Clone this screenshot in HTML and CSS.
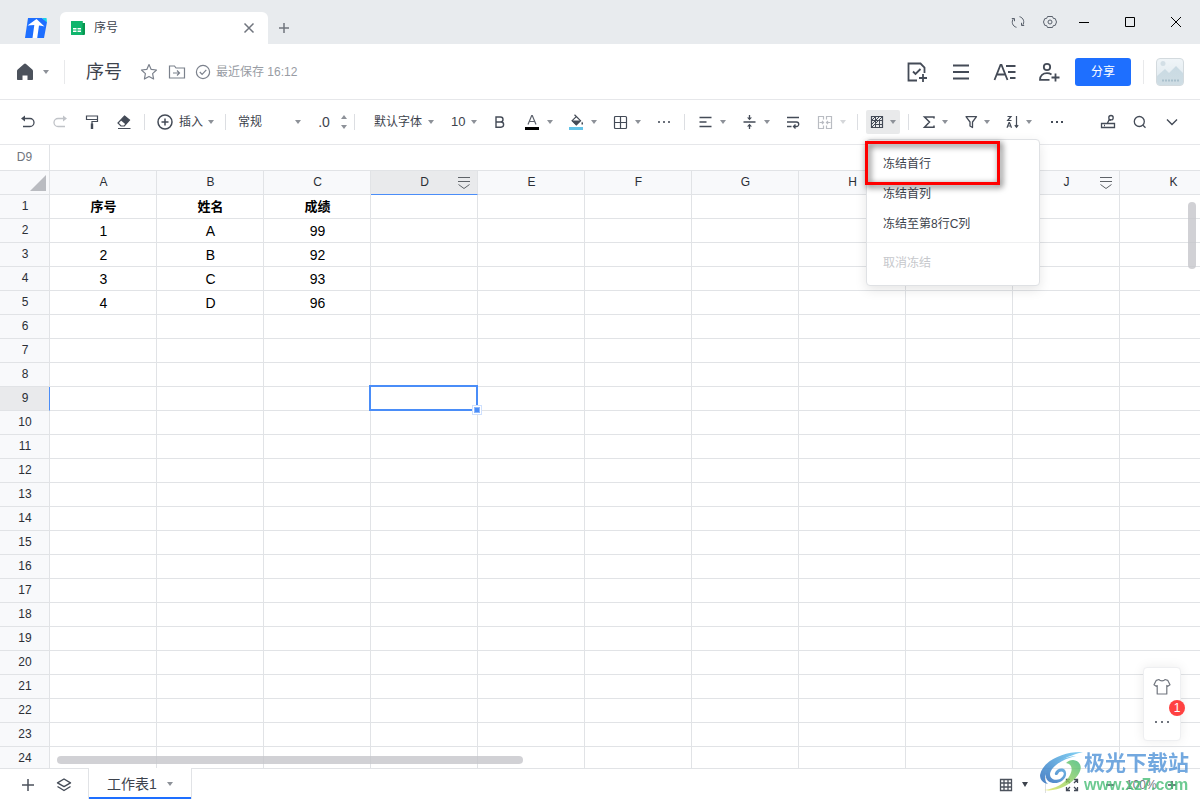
FILE: index.html
```html
<!DOCTYPE html>
<html lang="zh-CN">
<head>
<meta charset="utf-8">
<title>序号</title>
<link rel="stylesheet" href="styles.css">
</head>
<body>
<header class="titlebar">
  <svg class="logo" width="24" height="22" viewBox="0 0 24 22"><path d="M4 1h14l5 4-3 16H1z" fill="#1e6fff"/><path d="M18 1h4.500l.5 4.500z" fill="#19d3e6"/><path d="M3.500 8.500 12.500 2l8 7.500-3.500-.7-2-.3-1.800 12.500H8.500L10.300 8z" fill="#fff"/></svg>
  <div class="doc-tab">
    <svg width="14" height="14" viewBox="0 0 14 14"><path d="M1 0h10.500v2H14v11a1 1 0 0 1-1 1H1a1 1 0 0 1-1-1V1a1 1 0 0 1 1-1z" fill="#07964f"/><path d="M0 1a1 1 0 0 1 1-1h10.500v14H1a1 1 0 0 1-1-1z" fill="#10b56d"/><path d="M2 7h3.500v1.500H2zm4.500 0H10v1.500H6.500zM2 9.500h3.500V11H2zm4.500 0H10V11H6.500z" fill="#fff"/></svg>
    <span class="doc-tab-name">序号</span>
    <button class="plain" aria-label="关闭标签"><svg width="12" height="12" viewBox="0 0 12 12" fill="none" stroke="#70757e" stroke-width="1.500"><path d="m1.500 1.500 9 9m0-9-9 9"/></svg></button>
  </div>
  <button class="plain new-tab" aria-label="新标签"><svg width="12" height="12" viewBox="0 0 12 12" fill="none" stroke="#70757e" stroke-width="1.500"><path d="M6 1v10M1 6h10"/></svg></button>
  <div class="window-tools">
    <button class="plain w32" aria-label="刷新"><svg width="14" height="14" viewBox="0 0 14 14" fill="none" stroke="#5a616c"><path d="M5.500 12.300A5.300 5.300 0 0 1 2.600 3.600M.8 3.500h2.700v2.700M8.500 1.700a5.300 5.300 0 0 1 2.900 8.700M13.200 10.500h-2.700V7.800"/></svg></button>
    <button class="plain w32" aria-label="设置"><svg width="14" height="14" viewBox="0 0 14 14" fill="none" stroke="#5a616c"><path d="M4.500 1.500h5l.8 1.900 2 .3L13.500 7l-1.200 3.300-2 .3-.8 1.900h-5l-.8-1.900-2-.3L.5 7l1.200-3.300 2-.3z" stroke-linejoin="round"/><circle cx="7" cy="7" r="2"/></svg></button>
    <button class="plain w46 min" aria-label="最小化"><svg width="12" height="12" viewBox="0 0 12 12"><path d="M1 6h10v1H1z"/></svg></button>
    <button class="plain w46" aria-label="最大化"><svg width="12" height="12" viewBox="0 0 12 12" fill="none" stroke="#000"><path d="M1.500 1.500h9v9h-9z"/></svg></button>
    <button class="plain w46" aria-label="关闭"><svg width="12" height="12" viewBox="0 0 12 12" fill="none" stroke="#000"><path d="m1 1 10 10M11 1 1 11"/></svg></button>
  </div>
</header>

<div class="docbar">
  <button class="plain home" aria-label="主页"><svg width="18" height="18" viewBox="0 0 18 18"><path d="M8 .9a1.500 1.500 0 0 1 2 0l6.300 5.600c.4.400.7.900.7 1.500v8c0 .6-.4 1-1 1h-4.500v-4.500h-5V17H2c-.6 0-1-.4-1-1V8c0-.6.200-1.100.7-1.500z" fill="#4c525c"/></svg><i class="caret"></i></button>
  <i class="sep tall"></i>
  <h1 class="doc-title">序号</h1>
  <button class="plain" aria-label="收藏"><svg width="18" height="18" viewBox="0 0 18 18" fill="none" stroke="#7b818c" stroke-width="1.200" stroke-linejoin="round"><path d="m9 1.500 2.200 4.900 5.300.6-3.900 3.600 1 5.400L9 13.400 4.400 16l1-5.400L1.500 7l5.300-.6z"/></svg></button>
  <button class="plain" aria-label="移动"><svg width="18" height="18" viewBox="0 0 18 18" fill="none" stroke="#7b818c" stroke-width="1.200"><path d="M1.500 3h5l1.500 2h8.500v10h-15zM5 10h6.500M9 7.500l2.500 2.500L9 12.500"/></svg></button>
  <span class="saved"><svg width="16" height="16" viewBox="0 0 16 16" fill="none" stroke="#7b818c" stroke-width="1.200"><circle cx="8" cy="8" r="6.600"/><path d="m4.800 8 2.300 2.300 4.200-4.400"/></svg>最近保存 16:12</span>
  <div class="doc-actions">
    <button class="plain w44" aria-label="待办"><svg width="24" height="24" viewBox="0 0 24 24" fill="none" stroke="#444b57" stroke-width="1.800"><path d="M12 20.500H3.500v-17h12l4 4V13M8 11.500l2.500 2.500 5-5M14 18h8M18 14v8"/></svg></button>
    <button class="plain w44" aria-label="菜单"><svg width="18" height="18" viewBox="0 0 18 18" fill="none" stroke="#444b57" stroke-width="1.800"><path d="M1 2.500h16M1 9h16M1 15.500h16"/></svg></button>
    <button class="plain w44" aria-label="样式"><svg width="24" height="24" viewBox="0 0 24 24" fill="none" stroke="#444b57" stroke-width="1.800"><path d="m1.500 20 6-15h1l6 15M4 14.500h8M13 6h9.500M15 12h7.500M17 18h5.500"/></svg></button>
    <button class="plain w44" aria-label="协作者"><svg width="24" height="24" viewBox="0 0 24 24" fill="none" stroke="#444b57" stroke-width="1.800"><circle cx="10" cy="7" r="3.200"/><path d="M14.500 14.500C13 13.500 12 13.200 10 13.200c-4 0-7 2.300-7 6.600h9.500M14.500 17.500h8M18.500 13.500v8"/></svg></button>
    <button class="share">分享</button>
    <i class="sep tall"></i>
    <svg class="avatar" width="28" height="28" viewBox="0 0 28 28"><defs><linearGradient id="sky" x2="0" y2="1"><stop stop-color="#f0f5f8"/><stop offset="1" stop-color="#dce7ed"/></linearGradient><linearGradient id="hill" x2="0" y2="1"><stop stop-color="#c9dae3"/><stop offset="1" stop-color="#cfdde4"/></linearGradient></defs><rect x=".5" y=".5" width="27" height="27" rx="3.500" fill="url(#sky)" stroke="#d3dade"/><circle cx="7" cy="5.500" r="2.500" fill="#d3dfe6"/><path d="m1 18 8-7 4 4 7-7 7 7v9a3 3 0 0 1-3 3H4a3 3 0 0 1-3-3z" fill="url(#hill)"/><path d="M6 22.500h17" stroke="#a9c0cc" stroke-width="2" stroke-dasharray="2 1"/></svg>
  </div>
</div>

<div class="toolbar">
  <button class="plain w32" aria-label="撤销"><svg width="16" height="16" viewBox="0 0 16 16"><path d="M3 4.500h7a4 4 0 0 1 0 8H3" fill="none" stroke="#444b57" stroke-width="1.300"/><path d="M1 4.500 5 1.500v6z" fill="#444b57"/></svg></button>
  <button class="plain w32" aria-label="重做" disabled><svg width="16" height="16" viewBox="0 0 16 16"><path d="M13 4.500H6a4 4 0 0 0 0 8h7" fill="none" stroke="#c0c3c8" stroke-width="1.300"/><path d="m15 4.500-4-3v6z" fill="#c0c3c8"/></svg></button>
  <button class="plain w32" aria-label="格式刷"><svg width="16" height="16" viewBox="0 0 16 16" fill="none" stroke="#444b57" stroke-width="1.200"><path d="M2.500 2h11v3.500h-11zM13.500 3.800v3.700H8V10"/><path d="M8 9.500V15" stroke-width="2.400"/></svg></button>
  <button class="plain w32" aria-label="清除格式"><svg width="16" height="16" viewBox="0 0 16 16"><path d="m8.500 2 5 4-3.800 4.500-5-4.200z" fill="#444b57"/><path d="m8.500 2 5 4-5.200 6H5L2 9z" fill="none" stroke="#444b57" stroke-width="1.200"/><path d="M2 14.500h12.500" stroke="#444b57"/></svg></button>
  <i class="sep"></i>
  <button class="plain insert"><svg width="18" height="18" viewBox="0 0 18 18" fill="none" stroke="#444b57" stroke-width="1.500"><circle cx="9" cy="9" r="7"/><path d="M9 5.500v7M5.500 9h7"/></svg>插入<i class="caret"></i></button>
  <i class="sep"></i>
  <label class="pick pick-format"><select aria-label="数字格式"><option>常规</option></select><i class="caret"></i></label>
  <button class="plain decimals">.0</button>
  <button class="plain spinner" aria-label="小数位数"><i class="caret up"></i><i class="caret"></i></button>
  <i class="sep"></i>
  <label class="pick pick-font"><select aria-label="字体"><option>默认字体</option></select><i class="caret"></i></label>
  <label class="pick pick-size"><select aria-label="字号"><option>10</option></select><i class="caret"></i></label>
  <button class="plain w32" aria-label="加粗"><svg width="16" height="16" viewBox="0 0 16 16" fill="none" stroke="#444b57" stroke-width="1.400"><path d="M4 3h4.500a2.500 2.500 0 0 1 0 5H4zm0 5h5a2.600 2.600 0 0 1 0 5.200H4z"/></svg></button>
  <button class="plain split" aria-label="字体颜色"><svg width="16" height="16" viewBox="0 0 16 16"><path d="m4 10.500 3.700-9h.6l3.700 9M5.300 7.500h5.400" fill="none" stroke="#5b616c" stroke-width="1.200"/><path d="M1 13h14v3H1z"/></svg><i class="caret"></i></button>
  <button class="plain split" aria-label="填充颜色"><svg width="16" height="16" viewBox="0 0 16 16"><path d="M1 13h14v3H1z" fill="#63c3e8"/><path d="m8.300 2.500 4.200 4.200-4.200 4.200-4.200-4.200zM8.300 2.500 6.500.8" fill="none" stroke="#444b57" stroke-width="1.200"/><path d="M3.600 6.500h9.400l-4.700 4.700z" fill="#444b57"/><path d="M14 7.500l1 1.500v1.500h-1.500V9z" fill="#444b57"/></svg><i class="caret"></i></button>
  <button class="plain split" aria-label="边框"><svg width="16" height="16" viewBox="0 0 16 16" fill="none" stroke="#444b57" stroke-width="1.200"><rect x="2.500" y="2.500" width="12" height="12" rx="1"/><path d="M8.500 2.500v12M2.500 8.500h12"/></svg><i class="caret"></i></button>
  <button class="plain w32" aria-label="更多格式"><svg width="16" height="16" viewBox="0 0 16 16" fill="#6b717b"><path d="M2 7h2v2H2zm5 0h2v2H7zm5 0h2v2h-2z"/></svg></button>
  <i class="sep"></i>
  <button class="plain split" aria-label="水平对齐"><svg width="16" height="16" viewBox="0 0 16 16" fill="none" stroke="#444b57" stroke-width="1.300"><path d="M2.500 3.500h12M2.500 8h7M2.500 12.500h12"/></svg><i class="caret"></i></button>
  <button class="plain split" aria-label="垂直对齐"><svg width="16" height="16" viewBox="0 0 16 16"><path d="M2.500 8h12M8.500 1v3m0 8v3" stroke="#444b57" stroke-width="1.300"/><path d="M6 3.500h5l-2.500 2.800zM6 12.500h5L8.500 9.700z" fill="#444b57"/></svg><i class="caret"></i></button>
  <button class="plain w32" aria-label="自动换行"><svg width="16" height="16" viewBox="0 0 16 16" fill="none" stroke="#444b57" stroke-width="1.300"><path d="M2 3.500h12M2 8h9.500a2.200 2.200 0 0 1 0 4.500H9M2 12.500h4.500M10.500 10.500l-2 2 2 2"/></svg></button>
  <button class="plain split" aria-label="合并单元格" disabled><svg width="16" height="16" viewBox="0 0 16 16" fill="none" stroke="#b9bcc2" stroke-width="1.200"><path d="M6.500 5.500v-3h-5v12h5v-3M9.500 5.500v-3h5v12h-5v-3M2.500 8.500h4M5 7l1.500 1.500L5 10M13.500 8.500h-4M11 7 9.500 8.500 11 10"/></svg><i class="caret"></i></button>
  <i class="sep"></i>
  <div class="freeze">
    <button class="plain freeze-button" aria-label="冻结" aria-expanded="true"><svg width="14" height="14" viewBox="0 0 14 14" fill="none" stroke="#444b57"><path d="M1.500 1.500h11v11h-11z" stroke-width="1.200"/><path d="M1.500 5.500h11M5.500 1.500v11M9.500 5.500v7M5.500 9.500h7M1.500 5.500l4-4M1.500 9.500l8-8M1.500 12.500l11-11"/></svg><i class="caret"></i></button>
    <div class="menu" role="menu">
      <button class="menu-item marked" role="menuitem">冻结首行</button>
      <button class="menu-item" role="menuitem">冻结首列</button>
      <button class="menu-item" role="menuitem">冻结至第8行C列</button>
      <hr class="menu-line">
      <button class="menu-item" role="menuitem" disabled>取消冻结</button>
    </div>
  </div>
  <i class="sep"></i>
  <button class="plain split close" aria-label="求和"><svg width="16" height="16" viewBox="0 0 16 16" fill="none" stroke="#444b57" stroke-width="1.500"><path d="M13 4.500V3H3.500l5 5-5 5.200H13v-1.700"/></svg><i class="caret"></i></button>
  <button class="plain split close" aria-label="筛选"><svg width="16" height="16" viewBox="0 0 16 16" fill="none" stroke="#444b57" stroke-width="1.300"><path d="M3 2.700h10.500L9.500 8v5.500L7 12V8z" stroke-linejoin="round"/></svg><i class="caret"></i></button>
  <button class="plain split close" aria-label="排序"><svg width="16" height="16" viewBox="0 0 16 16" fill="none" stroke="#444b57" stroke-width="1.200"><path d="M2.500 2.500H6L2.700 6.500H6.500M2 13.800l2-5.300h.5l2 5.300M2.800 12h3M11.500 2v11M9.800 11.200l1.700 2 1.700-2"/></svg><i class="caret"></i></button>
  <button class="plain w32 more" aria-label="更多"><svg width="16" height="16" viewBox="0 0 16 16" fill="#444b57"><path d="M2 7h2v2H2zm5 0h2v2H7zm5 0h2v2h-2z"/></svg></button>
  <div class="toolbar-end">
    <button class="plain w32" aria-label="工具"><svg width="16" height="16" viewBox="0 0 16 16" fill="none" stroke="#444b57" stroke-width="1.300"><path d="M1.500 9.500h13v4h-13zM4 11.500h1M7.500 9l1.500-3h2"/><circle cx="11" cy="3.700" r="2.200"/></svg></button>
    <button class="plain w32" aria-label="查找"><svg width="16" height="16" viewBox="0 0 16 16" fill="none" stroke="#444b57" stroke-width="1.300"><circle cx="7.300" cy="7.500" r="5"/><path d="m11 11.200 2.500 2.500"/></svg></button>
    <button class="plain w32" aria-label="收起"><svg width="16" height="16" viewBox="0 0 16 16" fill="none" stroke="#444b57" stroke-width="1.400"><path d="m3 5.500 5 5 5-5"/></svg></button>
  </div>
</div>

<div class="formula-bar">
  <span class="cell-name">D9</span>
  <input class="formula" aria-label="编辑栏">
</div>

<main class="sheet">
  <table class="grid" id="grid"></table>
  <i class="scroll-y"></i>
  <i class="scroll-x"></i>
  <aside class="float-panel">
    <button class="plain" aria-label="皮肤"><svg width="18" height="18" viewBox="0 0 18 18" fill="none" stroke="#70757e" stroke-width="1.200" stroke-linejoin="round"><path d="M6 1.500c1 1.700 5 1.700 6 0l2.700.8 2.300 4.500-2.200 1.500-1-.8v8.500H4.200V7.500l-1 .8L1 6.800l2.300-4.500z"/></svg></button>
    <button class="plain" aria-label="更多"><svg width="16" height="16" viewBox="0 0 16 16" fill="#70757e"><path d="M1 7h2v2H1zm6 0h2v2H7zm6 0h2v2h-2z"/></svg></button>
    <span class="badge">1</span>
  </aside>
</main>

<footer class="bottombar">
  <button class="plain w36" aria-label="新增工作表"><svg width="14" height="14" viewBox="0 0 14 14" stroke="#4c525c" stroke-width="1.500"><path d="M7 1v12M1 7h12"/></svg></button>
  <button class="plain w36" aria-label="工作表列表"><svg width="16" height="16" viewBox="0 0 16 16" fill="none" stroke="#444b57" stroke-width="1.400" stroke-linejoin="round"><path d="m8 2 6.500 3.800L8 9.600 1.500 5.800zM1.500 9.500 8 13.500l6.500-4"/></svg></button>
  <button class="plain sheet-tab">工作表1<i class="caret"></i></button>
  <div class="view-tools">
    <button class="plain view-mode" aria-label="视图"><svg width="14" height="14" viewBox="0 0 14 14" fill="none" stroke="#4c525c" stroke-width="1.300"><path d="M1.500 1.500h11v11h-11zM1.500 5h11M1.500 9h11M5 1.500v11M9 1.500v11"/></svg><i class="caret dark"></i></button>
    <i class="sep"></i>
    <button class="plain w44" aria-label="全屏"><svg width="14" height="14" viewBox="0 0 14 14" fill="none" stroke="#444b57" stroke-width="1.300"><path d="M1.500 5V1.500H5M1.500 1.500 5 5M9 1.500h3.500V5M12.500 1.500 9 5M1.500 9v3.500H5M1.500 12.500 5 9M9 12.500h3.500V9M12.500 12.500 9 9"/></svg></button>
    <button class="plain w32" aria-label="缩小"><svg width="10" height="10" viewBox="0 0 10 10" stroke="#444b57" stroke-width="1.500"><path d="M1 5h8"/></svg></button>
    <span class="zoom">100%</span>
    <button class="plain w32" aria-label="放大"><svg width="10" height="10" viewBox="0 0 10 10" stroke="#444b57" stroke-width="1.500"><path d="M1 5h8M5 1v8"/></svg></button>
  </div>
</footer>

<div class="watermark">
  <svg width="44" height="42" viewBox="0 0 44 42"><defs><linearGradient id="wave" x1="0" y1="1" x2="1" y2="0"><stop stop-color="#1f62b8"/><stop offset="1" stop-color="#66c8f2"/></linearGradient><linearGradient id="leaf" x1="0" y1="1" x2="1" y2="0"><stop stop-color="#e6e65a"/><stop offset=".5" stop-color="#8fd05f"/><stop offset="1" stop-color="#3db876"/></linearGradient></defs><path d="M43 1C25 0 3 9 0 24c0 5 3 8 8 9-4-3-4-8 0-13C14 11 28 5 43 1z" fill="url(#wave)"/><path d="M36 5C22 8 11 16 10 23c0 5 5 7 10 5 3-2 5-5 3-7-1-1-4-1-5 2-1 2-4 1-3-1 1-4 7-6 10-3 4 6-3 14-12 13-6-1-8-5-7-10C8 13 22 6 36 5z" fill="url(#wave)"/><path d="M33 9c8 1 10 8 5 15C30 35 16 41 4 39c11-1 22-7 26-15 3-6 2-11-4-12 2-2 4-3 7-3z" fill="url(#leaf)"/></svg>
  <div class="watermark-text"><strong>极光下载站</strong><span>www.xz7.com</span></div>
</div>
<script src="grid.js"></script>
</body>
</html>
```

FILE: styles.css
```css
*, *::before, *::after { box-sizing: border-box; }

body {
  margin: 0;
  height: 100vh;
  display: flex;
  flex-direction: column;
  overflow: hidden;
  background: #fff;
  color: #3d434d;
  font: 12px/16px "Liberation Sans", "Noto Sans CJK SC", sans-serif;
}

button, select, input { font: inherit; color: inherit; }
svg { display: block; flex: none; }

.plain {
  display: flex;
  align-items: center;
  justify-content: center;
  flex: none;
  padding: 0;
  border: 0;
  background: none;
}

.w32 { width: 32px; }
.w36 { width: 36px; }
.w44 { width: 44px; }
.w46 { width: 46px; }

.caret {
  flex: none;
  width: 0;
  height: 0;
  border: 3px solid transparent;
  border-top: 4px solid #8d9198;
  border-bottom: 0;
}
.caret.up { border-top: 0; border-bottom: 4px solid #8d9198; }
.caret.dark { border-top: 5px solid #3d434d; }
:disabled .caret { border-top-color: #d5d7da; }

.sep { flex: none; width: 1px; height: 16px; margin: 0 4px; background: #dcdee2; }
.sep.tall { height: 24px; margin: 0; background: #e8e9eb; }

/* Window title bar */
.titlebar {
  display: flex;
  flex: none;
  height: 44px;
  padding: 12px 1px 0 24px;
  background: #e8ebee;
}
.logo { margin: 5px 12px 0 0; }
.doc-tab {
  display: flex;
  align-items: center;
  width: 208px;
  padding: 0 13px 0 11px;
  border-radius: 6px 6px 0 0;
  background: #fff;
}
.doc-tab-name { flex: 1; padding-left: 9px; }
.new-tab { width: 32px; }
.window-tools { display: flex; height: 20px; margin-left: auto; }
.window-tools .min { margin-left: -5px; }

/* Document bar */
.docbar {
  display: flex;
  flex: none;
  align-items: center;
  height: 56px;
  padding: 0 16px;
  border-bottom: 1px solid #e6e7ea;
}
.home { gap: 9px; width: 33px; margin-right: 15px; }
.doc-title { margin: 0 18px 0 21px; font-size: 18px; line-height: 24px; font-weight: 400; }
.docbar > .plain + .plain { margin: 0 9px 0 10px; }
.saved { display: flex; align-items: center; gap: 5px; color: #989ca4; }
.doc-actions { display: flex; align-items: center; margin-left: auto; }
.share {
  width: 56px;
  height: 28px;
  margin: 0 12px 0 4px;
  padding: 0;
  border: 0;
  border-radius: 3px;
  background: #1e6fff;
  color: #fff;
}
.avatar { margin-left: 12px; }

/* Toolbar */
.toolbar {
  display: flex;
  flex: none;
  align-items: center;
  height: 45px;
  padding: 0 12px;
  border-bottom: 1px solid #e6e7ea;
}
.toolbar > .plain { height: 24px; }
.insert { width: 72px; gap: 5px; }
.pick { display: flex; align-items: center; flex: none; }
.pick select {
  flex: 1;
  min-width: 0;
  padding: 0;
  border: 0;
  background: none;
  appearance: none;
}
.pick-format { width: 80px; padding: 0 9px 0 8px; }
.pick-font { width: 81px; padding: 0 6px 0 15px; }
.pick-size { width: 44px; padding: 0 7px 0 11px; font-size: 13px; }
.decimals { width: 28px; font-size: 14px; }
.spinner { flex-direction: column; gap: 6px; width: 12px; }
.split { width: 44px; gap: 7px; }
.split.close { width: 42px; gap: 5px; }
.more { margin-left: 2px; }
.toolbar-end { display: flex; margin-left: auto; }

.freeze { position: relative; flex: none; margin: 0 4px; }
.freeze-button { width: 34px; height: 24px; gap: 6px; border-radius: 2px; background: #e9eaeb; }
.menu {
  position: absolute;
  z-index: 5;
  top: 29px;
  left: 0;
  width: 174px;
  padding: 9px 0 7px;
  border: 1px solid #dfe1e4;
  border-radius: 4px;
  background: #fff;
  box-shadow: 0 4px 12px rgba(0, 0, 0, .1);
}
.menu-item {
  position: relative;
  display: block;
  width: 100%;
  height: 30px;
  padding: 0 16px;
  border: 0;
  background: none;
  text-align: left;
}
.menu-item:disabled { color: #c6c8cc; }
.menu-line { height: 1px; margin: 3px 0 5px; border: 0; background: #eff0f1; }
.marked::after {
  content: "";
  position: absolute;
  z-index: 1;
  top: -8px;
  left: -2px;
  width: 135px;
  height: 44px;
  border: 3px solid #f00;
  filter: drop-shadow(2px 2px 3px rgba(0, 0, 0, .7));
}

/* Formula bar */
.formula-bar { display: flex; flex: none; height: 26px; border-bottom: 1px solid #e1e3e6; }
.cell-name {
  width: 50px;
  border-right: 1px solid #e1e3e6;
  color: #70757e;
  line-height: 24px;
  text-align: center;
}
.formula { flex: 1; padding: 0 8px; border: 0; outline: 0; background: none; }

/* Sheet */
.sheet { position: relative; flex: 1; min-height: 0; overflow: hidden; }
.grid { width: 1227px; table-layout: fixed; border-spacing: 0; }
.grid th, .grid td {
  height: 24px;
  padding: 0 0 0 1px;
  border-right: 1px solid #e1e3e6;
  border-bottom: 1px solid #e1e3e6;
  text-align: center;
  line-height: 16px;
}
.grid th { padding-bottom: 2px; background: #f8f9fb; color: #2b2f36; font-weight: 400; }
.grid td { position: relative; color: #000; font-size: 14px; }
.grid .bold { font-weight: 700; font-size: 13px; }
.col-head { position: relative; }
.col-row { width: 50px; }
.filter-mark { position: absolute; top: 5px; right: 6px; }
.grid .active-col { background: #e9eaec; border-bottom-color: #4a8df8; }
.grid .active-row { background: #e9eaec; border-right-color: #4a8df8; }
.corner { position: relative; }
.corner::after {
  content: "";
  position: absolute;
  right: 3px;
  bottom: 3px;
  border-left: 16px solid transparent;
  border-bottom: 16px solid #babcc1;
}
.active-cell::before {
  content: "";
  position: absolute;
  z-index: 1;
  inset: -2px -1px -1px -2px;
  border: 2px solid #4a8df8;
}
.active-cell::after {
  content: "";
  position: absolute;
  z-index: 2;
  right: -3px;
  bottom: -3px;
  width: 6px;
  height: 6px;
  border: 1px solid #8bb6fa;
  background: #4a8df8;
  box-shadow: 0 0 0 1px #fff, 0 0 0 2px #cfe0fd;
}
.scroll-y, .scroll-x { position: absolute; border-radius: 4px; background: rgba(197, 198, 203, .8); }
.scroll-y { top: 31px; right: 4px; width: 8px; height: 67px; }
.scroll-x { bottom: 4px; left: 57px; width: 466px; height: 8px; }

.float-panel {
  position: absolute;
  right: 19px;
  bottom: 27px;
  display: flex;
  flex-direction: column;
  align-items: center;
  gap: 18px;
  width: 38px;
  padding: 10px 0;
  border: 1px solid #eeeff1;
  border-radius: 4px;
  background: #fff;
  box-shadow: 0 0 12px rgba(0, 0, 0, .08);
}
.badge {
  position: absolute;
  top: 32px;
  right: -5px;
  width: 16px;
  height: 16px;
  border-radius: 8px;
  background: #ff4141;
  color: #fff;
  text-align: center;
}

/* Bottom bar */
.bottombar {
  display: flex;
  flex: none;
  height: 32px;
  padding: 0 12px 0 10px;
  border-top: 1px solid #e1e3e6;
}
.sheet-tab {
  gap: 10px;
  width: 104px;
  height: 31px;
  margin: -1px 0 0 6px;
  border: solid #e1e3e6;
  border-width: 0 1px;
  background: #fff;
  box-shadow: inset 0 -2px #1e6fff;
  font-size: 14px;
}
.view-tools { display: flex; align-items: center; margin-left: auto; }
.view-mode { width: 44px; gap: 9px; margin-right: 6px; }
.zoom { width: 30px; text-align: center; color: #70757e; }

.watermark {
  position: absolute;
  z-index: 6;
  right: 11px;
  bottom: 7px;
  display: flex;
  opacity: .8;
  pointer-events: none;
}
.watermark-text { display: flex; flex-direction: column; justify-content: space-between; }
.watermark strong { color: #5093d8; font-size: 21px; line-height: 24px; }
.watermark span { color: #48bd76; font-size: 16px; font-weight: 700; }
```

FILE: grid.js
```js
const columns = "ABCDEFGHIJK".split("");
const data = [
  ["序号", "姓名", "成绩"],
  ["1", "A", "99"],
  ["2", "B", "92"],
  ["3", "C", "93"],
  ["4", "D", "96"]
];
const filterMark = '<svg class="filter-mark" width="14" height="14" viewBox="0 0 14 14" fill="none" stroke="#5f6368"><path d="M1 1.500h12M1 5.500h12M1.500 8.500l5.500 4 5.500-4"/></svg>';

let html = '<thead><tr><th class="col-row corner"></th>';
for (const name of columns) {
  const active = name === "D" ? " active-col" : "";
  const mark = name === "D" || name === "J" ? filterMark : "";
  html += `<th class="col-head${active}" scope="col">${name}${mark}</th>`;
}
html += "</tr></thead><tbody>";
for (let row = 1; row <= 24; row++) {
  html += `<tr><th scope="row"${row === 9 ? ' class="active-row"' : ""}>${row}</th>`;
  columns.forEach((name, i) => {
    const value = (data[row - 1] || [])[i] || "";
    const cls = row === 1 ? "bold" : row === 9 && name === "D" ? "active-cell" : "";
    html += `<td${cls ? ` class="${cls}"` : ""}>${value}</td>`;
  });
  html += "</tr>";
}
document.getElementById("grid").innerHTML = html + "</tbody>";
```
